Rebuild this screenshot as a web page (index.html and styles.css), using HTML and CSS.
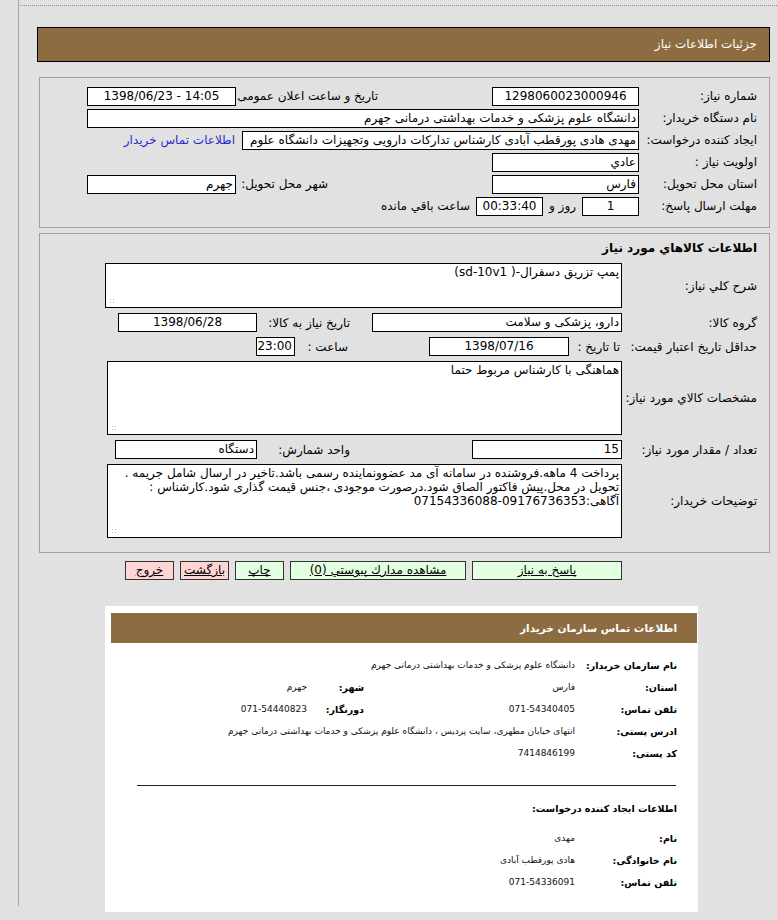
FILE: index.html
```html
<!DOCTYPE html>
<html lang="fa" dir="rtl">
<head>
<meta charset="utf-8">
<title>جزئیات اطلاعات نیاز</title>
<link rel="stylesheet" href="styles.css">
</head>
<body>
<div class="page">
  <div class="topline"></div>
  <div class="titlebar">جزئیات اطلاعات نیاز</div>

  <div class="box box1">
    <div class="grid1">
      <div class="lbl">شماره نیاز:</div>
      <div class="cell"><div class="fld w147 ctr">1298060023000946</div></div>
      <div class="lbl">تاریخ و ساعت اعلان عمومی:</div>
      <div class="cell"><div class="fld w149 ctr ltr">1398/06/23 - 14:05</div></div>

      <div class="lbl">نام دستگاه خریدار:</div>
      <div class="cell span3"><div class="fld w552">دانشگاه علوم پزشکی و خدمات بهداشتی درمانی جهرم</div></div>

      <div class="lbl">ایجاد کننده درخواست:</div>
      <div class="cell span3 inline">
        <div class="fld w397">مهدی هادی پورقطب آبادی کارشناس تدارکات دارویی وتجهیزات دانشگاه علوم</div>
        <a class="link" href="#">اطلاعات تماس خریدار</a>
      </div>

      <div class="lbl">اولویت نیاز :</div>
      <div class="cell span3"><div class="fld w147">عادي</div></div>

      <div class="lbl">استان محل تحویل:</div>
      <div class="cell"><div class="fld w147">فارس</div></div>
      <div class="lbl city">شهر محل تحویل:</div>
      <div class="cell"><div class="fld w149">جهرم</div></div>

      <div class="lbl">مهلت ارسال پاسخ:</div>
      <div class="cell span3 inline">
        <div class="fld w57 ctr">1</div>
        <span class="txt">روز و</span>
        <div class="fld w67 ctr">00:33:40</div>
        <span class="txt">ساعت باقي مانده</span>
      </div>
    </div>
  </div>

  <div class="box box2">
    <div class="grid2">
      <div class="heading">اطلاعات کالاهاي مورد نیاز</div>

      <div class="lbl">شرح کلي نیاز:</div>
      <div class="ta ta1">پمپ تزریق دسفرال-( sd-10v1)</div>

      <div class="lbl">گروه کالا:</div>
      <div class="inline">
        <div class="fld w250">دارو، پزشکی و سلامت</div>
        <div class="sub w115">تاریخ نیاز به کالا:</div>
        <div class="fld w139 ctr">1398/06/28</div>
      </div>

      <div class="lbl">حداقل تاریخ اعتبار قیمت:</div>
      <div class="inline">
        <div class="sub2 w53">تا تاریخ :</div>
        <div class="fld w140 ctr">1398/07/16</div>
        <div class="sub w134 pr81">ساعت :</div>
        <div class="fld w39 ctr">23:00</div>
      </div>

      <div class="lbl">مشخصات کالاي مورد نیاز:</div>
      <div class="ta ta2">هماهنگی با کارشناس مربوط حتما</div>

      <div class="lbl">تعداد / مقدار مورد نیاز:</div>
      <div class="inline">
        <div class="fld w150">15</div>
        <div class="sub w215 pr122">واحد شمارش:</div>
        <div class="fld w142">دستگاه</div>
      </div>

      <div class="lbl">توضیحات خریدار:</div>
      <div class="ta ta3">پرداخت 4 ماهه.فروشنده در سامانه آی مد عضوونماینده رسمی باشد.تاخیر در ارسال شامل جریمه .<br>تحویل در محل.پیش فاکتور الصاق شود.درصورت موجودی ،جنس قیمت گذاری شود.کارشناس :<br>آگاهی:<bdi dir="ltr">07154336088-09176736353</bdi></div>
    </div>
  </div>

  <div class="btnrow">
    <a class="btn green w150b" href="#">پاسخ به نیاز</a>
    <a class="btn green w176b" href="#">مشاهده مدارك پیوستي (0)</a>
    <a class="btn green w49b" href="#">چاپ</a>
    <a class="btn pink w49b" href="#">بازگشت</a>
    <a class="btn pink w49b" href="#">خروج</a>
  </div>

  <div class="contact">
    <div class="chead">اطلاعات تماس سازمان خریدار</div>
    <div class="cgrid">
      <div class="clbl">نام سازمان خریدار:</div>
      <div class="cval span3">دانشگاه علوم پزشکی و خدمات بهداشتی درمانی جهرم</div>

      <div class="clbl">استان:</div>
      <div class="cval">فارس</div>
      <div class="clbl">شهر:</div>
      <div class="cval">جهرم</div>

      <div class="clbl">تلفن تماس:</div>
      <div class="cval">071-54340405</div>
      <div class="clbl">دورنگار:</div>
      <div class="cval">071-54440823</div>

      <div class="clbl">ادرس پستی:</div>
      <div class="cval span3">انتهای خیابان مطهری، سایت پردیس ، دانشگاه علوم پزشکی و خدمات بهداشتی درمانی جهرم</div>

      <div class="clbl">کد پستی:</div>
      <div class="cval span3">7414846199</div>
    </div>
    <div class="hr"></div>
    <div class="csub">اطلاعات ایجاد کننده درخواست:</div>
    <div class="cgrid cgrid2">
      <div class="clbl">نام:</div>
      <div class="cval span3">مهدی</div>
      <div class="clbl">نام خانوادگی:</div>
      <div class="cval span3">هادی پورقطب آبادی</div>
      <div class="clbl">تلفن تماس:</div>
      <div class="cval span3">071-54336091</div>
    </div>
  </div>
</div>
</body>
</html>
```

FILE: styles.css
```css
html, body {
  margin: 0;
  padding: 0;
}
body {
  background: #e1e1e1;
  direction: rtl;
  font-family: "DejaVu Sans", sans-serif;
  font-size: 12px;
  color: #000;
  height: 920px;
  overflow: hidden;
}
.page {
  margin-left: 18px;
  border-left: 1px solid #a6a6a6;
  height: 906px;
  padding-top: 5px;
  box-sizing: border-box;
}
.topline {
  border-top: 1px dotted #8c8c8c;
  margin-left: 1px;
}
.titlebar {
  margin: 21px 7px 0 18px;
  height: 35px;
  box-sizing: border-box;
  border: 1px solid #000;
  background: #8c6c40;
  color: #fff;
  padding-right: 12px;
  line-height: 33px;
  font-size: 12px;
}
.box {
  margin: 15px 7px 0 20px;
  border: 1px solid #a0a0a0;
}
.box1 {
  padding: 7px 12px 10px 0;
}
.box2 {
  margin-top: 5px;
  padding: 6px 12px 14px 0;
}
.grid1 {
  display: grid;
  grid-template-columns: 118px 261px 142px 151px;
  grid-auto-rows: 22px;
  align-items: center;
}
.lbl {
  white-space: nowrap;
}
.lbl.city {
  padding-right: 50px;
}
.cell {
  display: flex;
  align-items: center;
}
.span3 {
  grid-column: span 3;
}
.inline {
  display: flex;
  align-items: center;
}
.fld {
  height: 19px;
  box-sizing: border-box;
  border: 1px solid #000;
  background: #fff;
  line-height: 17px;
  padding: 0 2px;
  white-space: nowrap;
  overflow: hidden;
  flex: none;
}
.ctr {
  text-align: center;
}
.ltr {
  direction: ltr;
}
.w39 { width: 39px; }
.w57 { width: 57px; }
.w67 { width: 67px; }
.w139 { width: 139px; }
.w140 { width: 140px; }
.w142 { width: 142px; }
.w147 { width: 147px; }
.w149 { width: 149px; }
.w150 { width: 150px; }
.w250 { width: 250px; }
.w397 { width: 397px; }
.w552 { width: 552px; }
.w53 { width: 53px; }
.w115 { width: 115px; }
.w134 { width: 134px; }
.w215 { width: 215px; }
.link {
  color: #2a2ad0;
  text-decoration: none;
  margin-right: 7px;
  white-space: nowrap;
}
.txt {
  margin: 0 6px;
  white-space: nowrap;
}
.grid2 {
  display: grid;
  grid-template-columns: 135px 520px;
  row-gap: 5px;
  align-items: center;
}
.heading {
  grid-column: span 2;
  font-weight: bold;
  line-height: 16px;
  margin-bottom: 2px;
}
.ta {
  position: relative;
  background: #fff;
  border: 1px solid #000;
  box-sizing: border-box;
  padding: 1px 2px;
  line-height: 14px;
  overflow: hidden;
}
.ta::after {
  content: "";
  position: absolute;
  left: 3px;
  bottom: 3px;
  width: 6px;
  height: 6px;
  background-image: radial-gradient(circle, #b8b8b8 0.8px, transparent 1px);
  background-size: 3px 3px;
}
.ta1 {
  width: 517px;
  height: 45px;
}
.ta2, .ta3 {
  width: 515px;
  height: 74px;
}
.ta3 {
  white-space: nowrap;
}
.sub {
  flex: none;
  box-sizing: border-box;
  padding-right: 22px;
  white-space: nowrap;
}
.sub2 {
  flex: none;
  box-sizing: border-box;
  padding-right: 2px;
  white-space: nowrap;
}
.pr81 { padding-right: 81px; }
.pr122 { padding-right: 122px; }
.btnrow {
  display: flex;
  gap: 6px;
  margin: 8px 155px 0 0;
}
.btn {
  display: block;
  height: 19px;
  box-sizing: border-box;
  border: 1px solid #333;
  line-height: 17px;
  text-align: center;
  color: #000;
  text-decoration: underline;
  white-space: nowrap;
}
.green { background: #e2ffe2; }
.pink { background: #ffd4d4; }
.w150b { width: 150px; }
.w176b { width: 176px; }
.w49b { width: 49px; }
.contact {
  margin: 26px 79px 0 auto;
  width: 593px;
  height: 306px;
  background: #fff;
  box-sizing: border-box;
  padding: 7px 1px 0 6px;
  font-size: 9px;
}
.chead {
  height: 30px;
  background: #8c6c40;
  color: #fff;
  font-weight: bold;
  font-size: 10.5px;
  line-height: 30px;
  padding-right: 20px;
}
.cgrid {
  display: grid;
  grid-template-columns: 102px 211px 57px 1fr;
  grid-auto-rows: 22px;
  align-items: center;
  margin: 11px 20px 0 0;
}
.clbl {
  font-weight: bold;
  font-size: 9.5px;
  white-space: nowrap;
}
.cval {
  white-space: nowrap;
  color: #111;
}
.hr {
  height: 1px;
  background: #222;
  margin: 21px 21px 0 26px;
}
.csub {
  font-weight: bold;
  font-size: 9.5px;
  line-height: 22px;
  margin: 12px 20px 0 0;
}
.cgrid2 {
  margin-top: 7px;
}
```
